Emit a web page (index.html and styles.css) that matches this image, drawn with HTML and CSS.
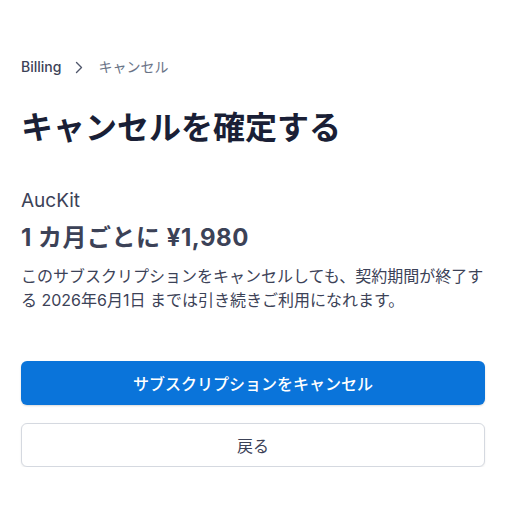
FILE: index.html
```html
<!DOCTYPE html>
<html lang="ja">
<head>
    <meta charset="UTF-8">
    <meta name="viewport" content="width=device-width, initial-scale=1.0">
    <title>キャンセルを確定する</title>
    <link rel="stylesheet" href="styles.css">
</head>
<body>

    <div class="page">
        <nav class="breadcrumb">
            <a href="#" class="crumb-link">Billing</a>
            <svg class="crumb-sep" width="8" height="13" viewBox="0 0 8 13">
                <path d="M1.5 1.5 L6.5 6.5 L1.5 11.5" fill="none" stroke="#4f566b" stroke-width="1.4" stroke-linecap="round" stroke-linejoin="round"/>
            </svg>
            <span class="crumb-current">キャンセル</span>
        </nav>

        <h1>キャンセルを確定する</h1>

        <div class="plan">
            <div class="plan-name">AucKit</div>
            <div class="plan-price">1 カ月ごとに ¥1,980</div>
            <p class="plan-note">このサブスクリプションをキャンセルしても、契約期間が終了する 2026年6月1日 までは引き続きご利用になれます。</p>
        </div>

        <div class="actions">
            <button class="btn btn-primary">サブスクリプションをキャンセル</button>
            <button class="btn btn-secondary">戻る</button>
        </div>
    </div>

</body>
</html>
```

FILE: styles.css
```css
body {
    margin: 0;
    background-color: #ffffff;
    font-family: Inter, "Noto Sans CJK JP", sans-serif;
    color: #3c4257;
}
.page {
    padding: 57px 21px 0 21px;
}
.breadcrumb {
    display: flex;
    align-items: center;
    font-size: 14px;
    line-height: 20px;
}
.crumb-link {
    color: #3c4257;
    text-decoration: none;
    font-weight: 500;
}
.crumb-sep {
    margin: 0 15px 0 14px;
}
.crumb-current {
    color: #697386;
}
h1 {
    margin: 31px 0 0 0;
    font-size: 32px;
    line-height: 40px;
    font-weight: 700;
    color: #1a1f36;
}
.plan {
    margin-top: 41px;
}
.plan-name {
    font-size: 19px;
    line-height: 24px;
    color: #3c4257;
}
.plan-price {
    margin-top: 10px;
    font-size: 24px;
    line-height: 30px;
    font-weight: 700;
    letter-spacing: 0.5px;
    color: #3c4257;
}
.plan-note {
    margin: 11px 0 0 0;
    font-size: 16px;
    line-height: 24px;
    color: #3c4257;
}
.actions {
    display: flex;
    flex-direction: column;
    gap: 18px;
    margin-top: 49px;
}
.btn {
    height: 44px;
    border-radius: 6px;
    font-family: inherit;
    font-size: 16px;
    cursor: pointer;
}
.btn-primary {
    background-color: #0a74da;
    color: #ffffff;
    border: none;
    font-weight: 500;
    box-shadow: 0 1px 2px rgba(0, 0, 0, 0.15);
}
.btn-secondary {
    background-color: #ffffff;
    color: #3c4257;
    border: 1px solid #d5d9e0;
    box-shadow: 0 1px 2px rgba(0, 0, 0, 0.08);
}
```
